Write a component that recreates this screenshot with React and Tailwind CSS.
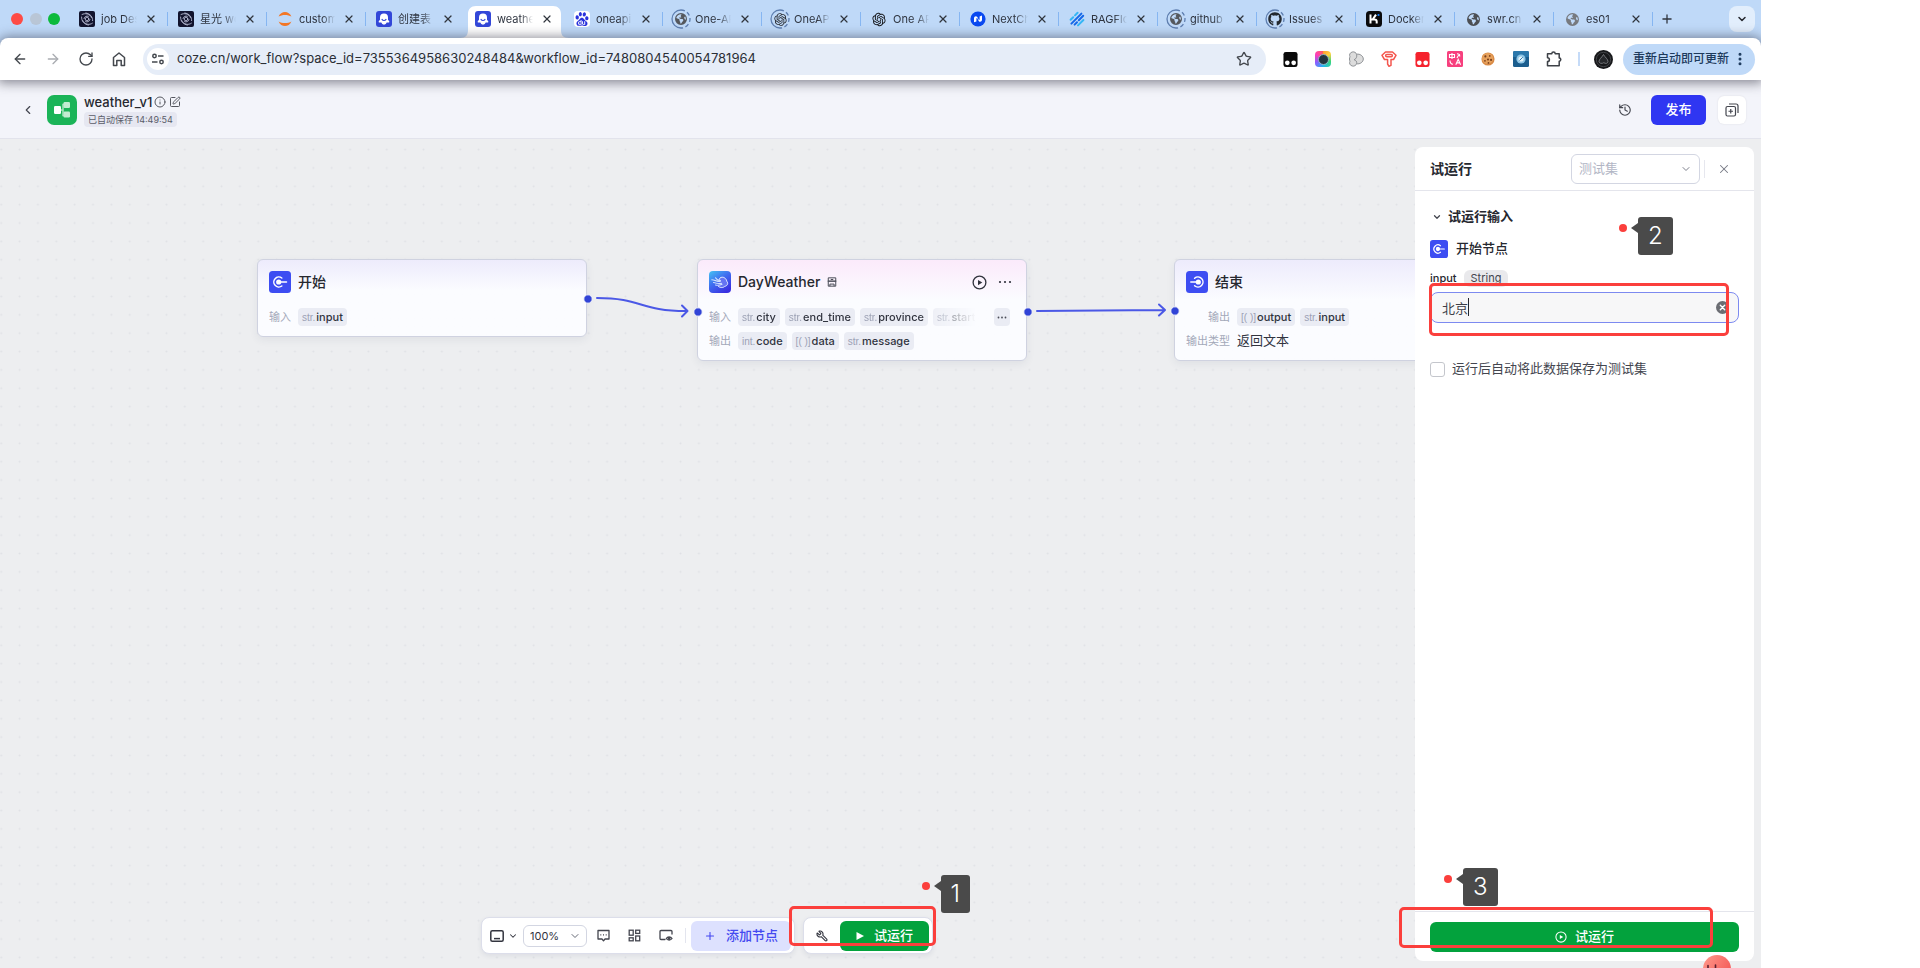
import React from "react";
import {
  ArrowLeft, ArrowRight, RotateCw, Star, X, Plus, ChevronDown, ChevronLeft,
  Info, SquarePen, History, EllipsisVertical, Wrench,
} from "lucide-react";
import { FaGithub, FaEarthAmericas } from "react-icons/fa6";
import { RiOpenaiFill } from "react-icons/ri";
import { SiBaidu } from "react-icons/si";

/* ---------- favicons ---------- */

const Swirl = () => (
  <svg viewBox="0 0 16 16" className="size-4">
    <rect width="16" height="16" rx="2" fill="#12142e" />
    <g fill="none" stroke="#b9bdd6" strokeWidth="0.9" strokeLinecap="round">
      <circle cx="8" cy="8" r="1.8" />
      <path d="M3 3.5C6 1.8 11 2.6 12.4 6.5" />
      <path d="M13.4 12.2C10.5 14.4 5.4 13.6 3.8 9.6" />
      <path d="M2.6 6C2.4 10 5 13.6 9.6 14" />
      <path d="M13.6 9.6C13.8 6 11.4 2.6 6.8 2" />
      <path d="M5 7.6C5.2 5.6 7.4 4.6 9.4 5.2" />
      <path d="M11 8.6C10.6 10.6 8.4 11.4 6.6 10.7" />
    </g>
  </svg>
);

const Jupyter = () => (
  <svg viewBox="0 0 16 16" className="size-4">
    <path d="M1.6 5.6C4 -0.6 12 -0.6 14.4 5.6C11 3.4 5 3.4 1.6 5.6Z" fill="#f37726" />
    <path d="M1.6 10.4C4 16.6 12 16.6 14.4 10.4C11 12.6 5 12.6 1.6 10.4Z" fill="#f37726" />
  </svg>
);

const Coze = () => (
  <svg viewBox="0 0 16 16" className="size-4">
    <rect width="16" height="16" rx="3" fill="#3347d8" />
    <path d="M8 2.4a4 4 0 0 1 4 4v2.4l1.2 1.4c.4.6 0 1.4-.8 1.4h-1.7a2.8 2.8 0 0 1-5.4 0H3.6c-.8 0-1.2-.8-.8-1.4L4 8.8V6.4a4 4 0 0 1 4-4Z" fill="#fff" />
    <path d="M6 8.4c.9 1.5 3.1 1.5 4 0" stroke="#3347d8" strokeWidth="1.1" fill="none" strokeLinecap="round" />
  </svg>
);

const Baidu = () => (
  <span className="flex size-4 items-center justify-center rounded-sm bg-white">
    <SiBaidu className="size-[14px] text-[#2a32dc]" />
  </span>
);

const Ringed = ({ children }) => (
  <span className="relative flex size-4 items-center justify-center">
    <svg viewBox="0 0 20 20" className="absolute -inset-0.5 size-5">
      <path d="M10 1a9 9 0 0 0 0 18" fill="none" stroke="#5f7fb0" strokeWidth="1.3" />
      <path d="M10 1a9 9 0 0 1 0 18" fill="none" stroke="#5f7fb0" strokeWidth="1.3" strokeDasharray="4 2.5" />
    </svg>
    {children}
  </span>
);

const Globe = () => <FaEarthAmericas className="size-3 text-[#55585d]" />;

const NextChat = () => (
  <svg viewBox="0 0 16 16" className="size-4">
    <circle cx="8" cy="8" r="7.6" fill="#0a49f0" />
    <path d="M4 11.200V7.200c0-2 2.300-2.700 3.300-1.100l1.400 2.600c.2.500.9.300.9-.2V5.500L12 4.400v4.400c0 2-2.300 2.700-3.300 1.100L7.300 7.300c-.2-.5-.9-.3-.9.2v2.9Z" fill="#fff" />
  </svg>
);

const RagFlow = () => (
  <svg viewBox="0 0 16 16" className="size-4">
    <g strokeWidth="2" strokeLinecap="round">
      <path d="M1.6 8.8 4.2 6.2M6 4.4 8.6 1.8" stroke="#35b6f5" />
      <path d="M2.4 12.6 12.4 2.6" stroke="#1668e8" />
      <path d="M5.6 13.6 8 11.2M9.8 9.2 14.2 4.8" stroke="#1668e8" />
      <path d="M9 14.4 14.4 9" stroke="#35b6f5" />
    </g>
  </svg>
);

const Kimi = () => (
  <svg viewBox="0 0 16 16" className="size-4">
    <rect width="16" height="16" rx="3.5" fill="#0b0b0d" />
    <path d="M4.5 3.500v9M4.500 8.600h4c1.600 0 2.200.8 2.200 2v1.900M10 3.600 6.800 8.400" fill="none" stroke="#fff" strokeWidth="2" />
    <circle cx="12.5" cy="4" r="1.1" fill="#1783ff" />
  </svg>
);

const TABS = [
  { t: "job Des", i: <Swirl /> },
  { t: "星光 wo", i: <Swirl /> },
  { t: "custom", i: <Jupyter /> },
  { t: "创建表", i: <Coze /> },
  { t: "weathe", i: <Coze />, active: true },
  { t: "oneapi", i: <Baidu /> },
  { t: "One-AP", i: <Ringed><Globe /></Ringed> },
  { t: "OneAPI", i: <Ringed><RiOpenaiFill className="size-[15px] text-[#25272b]" /></Ringed> },
  { t: "One API", i: <RiOpenaiFill className="size-[17px] text-[#101114]" /> },
  { t: "NextCh", i: <NextChat /> },
  { t: "RAGFlo", i: <RagFlow /> },
  { t: "github", i: <Ringed><Globe /></Ringed> },
  { t: "Issues", i: <Ringed><FaGithub className="size-[14px] text-[#24292f]" /></Ringed> },
  { t: "Docker", i: <Kimi /> },
  { t: "swr.cn", i: <FaEarthAmericas className="size-[13px] text-[#4c4f54]" /> },
  { t: "es01", i: <FaEarthAmericas className="size-[13px] text-[#777a7f]" /> },
];

function Tab({ t, i, active, divider }) {
  return (
    <div className="relative flex w-[99px] shrink items-start pl-[3px]">
      {active && (
        <svg viewBox="0 0 109 32" className="absolute bottom-0 left-[-5px] h-8 w-[109px]">
          <path d="M0 32C6 32 8 29 8 24V8C8 3 11 0 16 0H93C98 0 101 3 101 8V24C101 29 103 32 109 32Z" fill="#fff" />
        </svg>
      )}
      <div className="relative mt-[11px] flex h-4 w-full items-center pl-[7px]">
        <span className="flex size-4 shrink-0 items-center justify-center">{i}</span>
        <span className="ml-1.5 w-9 overflow-hidden whitespace-nowrap text-[11px] leading-4 text-[#2f3540] [mask-image:linear-gradient(to_right,black_65%,transparent)]">
          {t}
        </span>
        <button aria-label="关闭标签页" className="ml-[7px] flex size-3.5 items-center justify-center text-[#30353d]">
          <X className="size-3" strokeWidth={2.4} />
        </button>
        {divider && <span className="ml-auto h-3.5 w-px bg-[#86b6f2]" />}
      </div>
    </div>
  );
}

/* ---------- extension icons ---------- */

const Tamper = ({ fill }) => (
  <svg viewBox="0 0 16 16" className="size-[15px]">
    <rect x="0.5" width="15" height="16" rx="2.5" fill={fill} />
    <circle cx="4.6" cy="11.5" r="2.5" fill="#fff" />
    <circle cx="11.4" cy="11.5" r="2.5" fill="#fff" />
  </svg>
);

const EXTENSIONS = [
  { n: "脚本管理", i: <Tamper fill="#0a0a0a" /> },
  {
    n: "截图",
    i: (
      <span className="flex size-4 items-center justify-center rounded-sm bg-[conic-gradient(#ff9a2e,#ffd23f_15%,#37d67a_30%,#22b8f0_50%,#8d5cff_68%,#ff3fb4_85%,#ff5d5d)]">
        <span className="size-[11px] rounded-full border border-[#8fb5c4] bg-[#23353f]" />
      </span>
    ),
  },
  {
    n: "三环",
    i: (
      <svg viewBox="0 0 16 16" className="size-4" fill="#dcdcdc" stroke="#8f9296" strokeWidth="1">
        <path d="M4.200 1C6.500.4 8 1.800 8.600 3.200 12 2.600 15.300 5 15.300 8S12 13.400 8.600 12.800C8 14.200 6.500 15.600 4.200 15 1.800 14.400 1 12 2 10.200 1.300 8.800 1.300 7.200 2 5.800 1 4 1.800 1.600 4.200 1Z" />
        <path d="M8.600 3.200C9.300 6 8 8 6 8.800M8.600 12.800C9.300 10.500 7.500 8.800 6 8.800" fill="none" />
      </svg>
    ),
  },
  {
    n: "钥匙",
    i: (
      <svg viewBox="0 0 16 16" className="size-4" fill="none" stroke="#f4574f" strokeWidth="1.5" strokeLinejoin="round">
        <path d="M4.500 1h7L15 4.300 12.500 8.500H10v5.800L8 15.300 6.600 13V8.500H3.500L1 4.300Z" />
        <rect x="4.6" y="3.4" width="6.8" height="2.4" rx="1.2" />
      </svg>
    ),
  },
  { n: "脚本助手", i: <Tamper fill="#f5222d" /> },
  {
    n: "翻译",
    i: (
      <svg viewBox="0 0 16 16" className="size-4" fill="none" stroke="#fff" strokeWidth="1.1">
        <rect width="16" height="16" rx="1.5" fill="#f7407e" stroke="none" />
        <path d="M2.500 3.500h5v3h-5ZM5 2v6M10 2.800c2 0 2.800 1 2.800 2.600M10 7c.6-1.800 1.500-2.800 3-3.400M3 9.500c0 2.600 1 3.600 3 3.800M8.800 13.800 11.200 8.300 13.600 13.800M9.800 11.900h2.800" />
      </svg>
    ),
  },
  {
    n: "Cookie",
    i: (
      <svg viewBox="0 0 16 16" className="size-[14px]">
        <circle cx="8" cy="8" r="7.5" fill="#d98a45" />
        <circle cx="7.5" cy="7.3" r="6.3" fill="#e6a15c" />
        <g fill="#7a3f1b">
          <circle cx="5" cy="5" r="1.2" /><circle cx="10" cy="4.5" r="1" /><circle cx="8" cy="8.5" r="1.2" />
          <circle cx="4.5" cy="10" r="1" /><circle cx="11.5" cy="9" r="1.2" /><circle cx="8.5" cy="12.5" r="1" />
        </g>
      </svg>
    ),
  },
  {
    n: "浏览",
    i: (
      <svg viewBox="0 0 16 16" className="size-4">
        <rect width="16" height="16" rx="1.5" fill="#1b5e8e" />
        <path d="M0 1.500A1.500 1.500 0 0 1 1.500 0h13A1.500 1.500 0 0 1 16 1.500V6H0Z" fill="#2b78ab" />
        <circle cx="8" cy="8" r="4.6" fill="#8ec6e6" />
        <circle cx="8" cy="8" r="2.6" fill="#e4f3fa" />
        <path d="M6.500 9.500 9.800 6.200" stroke="#2b78ab" strokeWidth="1" />
      </svg>
    ),
  },
  {
    n: "扩展程序",
    i: (
      <svg viewBox="0 0 16 16" className="size-4" fill="none" stroke="#3d4147" strokeWidth="1.5" strokeLinejoin="round">
        <path d="M1.500 2.800h4.300a1.700 1.700 0 0 1 3.400 0h4v4.200a1.600 1.600 0 0 1 0 3.200v4.600H1.500V10.600a1.900 1.900 0 0 0 0-3.800Z" />
      </svg>
    ),
  },
];

/* ---------- node parts ---------- */

const StartIcon = ({ className }) => (
  <svg viewBox="0 0 22 22" className={className}>
    <rect width="22" height="22" rx="3.5" fill="#3d4df2" />
    <path d="M12.800 7A5 5 0 1 0 12.800 15" fill="none" stroke="#fff" strokeWidth="1.5" strokeLinecap="round" />
    <circle cx="9.7" cy="11" r="2.6" fill="#fff" />
    <path d="M10 11h7.500" stroke="#fff" strokeWidth="1.5" strokeLinecap="round" />
  </svg>
);

const EndIcon = ({ className }) => (
  <svg viewBox="0 0 22 22" className={className}>
    <rect width="22" height="22" rx="3.5" fill="#3d4df2" />
    <path d="M8.600 7.300A5 5 0 1 1 8.600 14.700" fill="none" stroke="#fff" strokeWidth="1.5" strokeLinecap="round" />
    <circle cx="12.3" cy="11" r="2.6" fill="#fff" />
    <path d="M4.800 11H12" stroke="#fff" strokeWidth="1.5" strokeLinecap="round" />
  </svg>
);

const WeatherIcon = ({ className }) => (
  <svg viewBox="0 0 22 22" className={className}>
    <defs>
      <linearGradient id="wx" x1="0" y1="0" x2="0.7" y2="1">
        <stop offset="0" stopColor="#45c3f3" />
        <stop offset="0.5" stopColor="#3f6cf0" />
        <stop offset="1" stopColor="#3a2fe0" />
      </linearGradient>
    </defs>
    <rect width="22" height="22" rx="4" fill="url(#wx)" />
    <path d="M9 15c2 2.200 5.500 1.800 6.800.3 2.600-.3 3.800-3.200 2-5C17.200 7 13.800 5 11 7 10 8 10.300 9 10.300 9.500" fill="#6674f2" stroke="#e6ecff" strokeWidth="1" />
    <path d="M2.800 8.800c3 .2 5 1.800 8.500 1.700M4.500 11.500c2.500.8 4.500 1.500 8 .8M6.500 6.800c1 1.800 3 2.700 5 2.700M6.500 14c2 .5 4 .5 6.500-.8" fill="none" stroke="#cfe0ff" strokeWidth="1.1" strokeLinecap="round" />
  </svg>
);

const PlayCircle = ({ className }) => (
  <svg viewBox="0 0 16 16" className={className}>
    <circle cx="8" cy="8" r="6.8" fill="none" stroke="currentColor" strokeWidth="1.4" />
    <path d="M6.400 5.200 11 8 6.400 10.800Z" fill="currentColor" />
  </svg>
);

function Chip({ type, name, className = "" }) {
  return (
    <span className={`flex h-[18px] shrink-0 items-center gap-px rounded bg-[#eaecf4] px-1 ${className}`}>
      <span className="font-['Liberation_Sans',sans-serif] text-[10px] text-[#9ca1b4]">{type}</span>
      <span className="text-[11px] font-medium text-[#31343f]">{name}</span>
    </span>
  );
}

const Label = ({ children, wide }) => (
  <span className={`${wide ? "w-11" : "w-[22px]"} mr-0.5 shrink-0 text-right text-[11px] text-[#a3a8b9]`}>{children}</span>
);

function Node({ className, tint, icon, title, extra, children }) {
  return (
    <section
      className={`absolute w-[330px] rounded-md border border-[#cfd2e0] bg-[#fbfcff] bg-linear-to-b ${tint} to-[#fbfcff] to-40% px-[11px] pt-2.5 pb-2.5 shadow-[0_3px_8px_rgba(40,50,90,0.07)] ${className}`}
    >
      <div className="flex h-6 items-center gap-[7px]">
        {icon}
        <h2 className="text-sm font-medium text-[#26282f]">{title}</h2>
        {extra}
      </div>
      <div className="mt-[14px] flex flex-col gap-1.5">{children}</div>
    </section>
  );
}

const Row = ({ children }) => <div className="flex h-[18px] items-center gap-[5px]">{children}</div>;

/* ---------- numbered callouts ---------- */

const Callout = ({ n, className }) => (
  <div className={`absolute z-30 flex items-start ${className}`}>
    <span className="mt-[7px] size-2 rounded-full bg-[#fb3f3c]" />
    <svg viewBox="0 0 7 10" className="mt-1.5 ml-1 h-2.5 w-[7px]"><path d="M0 5 7 0V10Z" fill="#4a4a4a" /></svg>
    <span className="flex h-[38px] items-center justify-center rounded-[3px] bg-[#4a4a4a] px-2.5 text-2xl font-light text-white">{n}</span>
  </div>
);

const Frame = ({ className }) => (
  <div className={`pointer-events-none absolute z-20 rounded-[5px] border-[3px] border-[#fb3f3c] ${className}`} />
);

export default function App() {
  return (
    <div className="min-h-screen bg-white pr-[159px] font-['Inter','Noto_Sans_CJK_SC',sans-serif] text-[#26282f]">
      <div className="flex min-h-screen flex-col overflow-hidden">
        {/* Tab strip */}
        <nav className="flex h-[38px] bg-[#bfd9f8]">
          <div className="flex w-[69px] shrink-0 items-start gap-1.5 pt-3 pl-[11px]">
            <span className="mt-px size-3 rounded-full bg-[#fe4b45]" />
            <span className="mt-px ml-px size-3 rounded-full bg-[#b9c6d6]" />
            <span className="mt-px size-3 rounded-full bg-[#0dba3c]" />
          </div>
          {TABS.map((tab, k) => (
            <Tab key={tab.t} {...tab} divider={k !== 3 && k !== 4} />
          ))}
          <button aria-label="新建标签页" className="mt-[11px] ml-1.5 flex size-4 items-center justify-center text-[#30353d]">
            <Plus className="size-3.5" strokeWidth={2.2} />
          </button>
          <button aria-label="搜索标签页" className="mt-1.5 mr-1.5 ml-auto flex h-[26px] w-[26px] items-center justify-center rounded-lg bg-[#e2eefc]">
            <ChevronDown className="size-3" strokeWidth={3} />
          </button>
        </nav>

        {/* Browser toolbar */}
        <div className="bg-[#bfd9f8]">
          <div className="relative z-10 flex h-[42px] items-center rounded-t-lg bg-white pr-1.5 shadow-[0_1px_12px_2px_rgba(60,60,75,0.6)]">
            <div className="flex w-[143px] items-center gap-[17px] pl-3 text-[#44484e]">
              <button aria-label="后退"><ArrowLeft className="size-4" strokeWidth={2} /></button>
              <button aria-label="前进" className="text-[#a9acb1]"><ArrowRight className="size-4" strokeWidth={2} /></button>
              <button aria-label="重新加载"><RotateCw className="size-4" strokeWidth={2} /></button>
              <button aria-label="主页">
                <svg viewBox="0 0 16 16" className="size-4" fill="none" stroke="currentColor" strokeWidth="1.5" strokeLinejoin="round">
                  <path d="M2.500 6.500 8 2l5.500 4.500V14.500h-3.300V9.500H5.800v5H2.500Z" />
                </svg>
              </button>
            </div>
            <div className="flex h-[31px] flex-1 items-center rounded-full bg-[#e6edf8] pr-3.5 pl-1">
              <button aria-label="网站信息" className="flex size-[22px] items-center justify-center rounded-full bg-white">
                <svg viewBox="0 0 14 14" className="size-3.5" fill="none" stroke="#44484e" strokeWidth="1.5">
                  <circle cx="3.5" cy="4" r="1.7" /><path d="M7 4h5.500M1 10h5.500" /><circle cx="10.5" cy="10" r="1.7" />
                </svg>
              </button>
              <input
                aria-label="地址"
                className="ml-2 flex-1 bg-transparent text-[13px] text-[#2b2f36] outline-none"
                defaultValue="coze.cn/work_flow?space_id=7355364958630248484&workflow_id=7480804540054781964"
              />
              <button aria-label="收藏"><Star className="size-4 text-[#44484e]" strokeWidth={2} /></button>
            </div>
            <div className="ml-4 flex items-center gap-[17px]">
              {EXTENSIONS.map((e) => (
                <button key={e.n} aria-label={e.n} className="flex size-4 items-center justify-center">{e.i}</button>
              ))}
            </div>
            <span className="ml-4 h-3.5 w-0.5 bg-[#c5dbf8]" />
            <button aria-label="个人资料" className="ml-3.5">
              <svg viewBox="0 0 19 19" className="size-[19px]">
                <circle cx="9.5" cy="9.5" r="9.5" fill="#17181a" />
                <circle cx="9.5" cy="9.5" r="7.2" fill="none" stroke="#4b4e52" strokeWidth="0.8" />
                <path d="M5 11.500C5 9 7.500 8 9.500 4.500 11 7.500 14 9 14 11.500c0 2-2.500 2.500-4.200 1.200C8 14 5 13.500 5 11.500Z" fill="#26282b" stroke="#85888c" strokeWidth="0.8" />
              </svg>
            </button>
            <button className="ml-2.5 flex h-[31px] w-[132px] items-center justify-end gap-[3px] rounded-full bg-[#bfd9f8] pr-[7px] text-xs font-medium text-[#1d3a5c]">
              重新启动即可更新
              <EllipsisVertical className="size-4" strokeWidth={2.5} />
            </button>
          </div>
        </div>

        {/* Workflow header */}
        <header className="flex h-[59px] items-center border-b border-[#e2e3ec] bg-[#f3f4fa] pt-0.5 pr-[15px] pl-[21px]">
          <button aria-label="返回"><ChevronLeft className="size-3.5 text-[#44464f]" /></button>
          <svg viewBox="0 0 30 30" className="ml-3 size-[30px]">
            <rect width="30" height="30" rx="7" fill="#1bb458" />
            <path d="M13 15h3V9.500h3M16 15v5.500h3" fill="none" stroke="#a9e5c0" strokeWidth="1.5" />
            <rect x="7" y="11" width="7" height="8" rx="1.2" fill="#fff" />
            <rect x="16.5" y="7" width="6.5" height="6" rx="1.2" fill="#c3ecd2" />
            <rect x="16.5" y="16.5" width="6.5" height="6" rx="1.2" fill="#c3ecd2" />
          </svg>
          <div className="ml-[7px] flex flex-col items-start gap-0.5 pt-px">
            <div className="flex items-center gap-[3px]">
              <h1 className="text-[13px] leading-4 font-medium">weather_v1</h1>
              <Info className="-ml-0.5 size-3 text-[#55575f]" />
              <button aria-label="编辑名称"><SquarePen className="size-3 text-[#55575f]" /></button>
            </div>
            <span className="rounded-sm bg-[#e6e7f1] px-1 text-[9px] leading-[15px] text-[#5a5c69]">已自动保存 14:49:54</span>
          </div>
          <button aria-label="历史记录" className="ml-auto"><History className="size-3.5 text-[#44464f]" /></button>
          <button className="ml-[19px] h-[30px] w-[55px] rounded-md bg-[#2f36f2] text-[13px] font-medium text-white">发布</button>
          <button aria-label="创建副本" className="ml-3 flex size-7 items-center justify-center rounded-md bg-white shadow-[0_0_2px_rgba(0,0,0,0.1)]">
            <svg viewBox="0 0 14 14" className="size-3.5" fill="none" stroke="#44464f" strokeWidth="1.2">
              <rect x="1" y="3.5" width="9.5" height="9.5" rx="1.5" />
              <path d="M4 1h7a2 2 0 0 1 2 2v7M5.750 6v4.500M3.500 8.250H8" />
            </svg>
          </button>
        </header>

        {/* Canvas */}
        <main className="relative flex flex-1 justify-end bg-[#edeef0]">
          <svg className="absolute inset-0 size-full">
            <defs>
              <pattern id="dots" x="-8" y="1.4" width="18.36" height="18.36" patternUnits="userSpaceOnUse">
                <circle cx="9.2" cy="9.2" r="1" fill="#dfe1e5" />
              </pattern>
            </defs>
            <rect width="100%" height="100%" fill="url(#dots)" />
          </svg>

          <Node className="top-[120px] left-[257px]" tint="from-[#edebfc]" icon={<StartIcon className="size-[22px]" />} title="开始">
            <Row>
              <Label>输入</Label>
              <Chip type="str." name="input" />
            </Row>
          </Node>

          <Node
            className="top-[120px] left-[697px]"
            tint="from-[#fbeafb]"
            icon={<WeatherIcon className="size-[22px]" />}
            title="DayWeather"
            extra={
              <>
                <svg viewBox="0 0 12 12" className="size-2.5" fill="none" stroke="#4a4c57" strokeWidth="1.2">
                  <path d="M1.500 1h9v4h-9ZM.8 5h10.400M1.500 5v6h9V5M3.500 11V8.500h5V11M4.500 3h3" />
                </svg>
                <button aria-label="运行节点" className="ml-auto text-[#30323c]"><PlayCircle className="size-[15px]" /></button>
                <button aria-label="更多" className="mr-[3px] ml-1 text-[#30323c]">
                  <svg viewBox="0 0 14 4" className="h-1 w-3.5" fill="currentColor">
                    <circle cx="2" cy="2" r="1.1" /><circle cx="7" cy="2" r="1.1" /><circle cx="12" cy="2" r="1.1" />
                  </svg>
                </button>
              </>
            }
          >
            <Row>
              <Label>输入</Label>
              <div className="flex w-[238px] gap-[5px] overflow-hidden [mask-image:linear-gradient(to_right,black_76%,transparent)]">
                <Chip type="str." name="city" />
                <Chip type="str." name="end_time" />
                <Chip type="str." name="province" />
                <Chip type="str." name="start_time" />
              </div>
              <button aria-label="更多输入" className="mr-[5px] ml-auto flex h-[18px] w-4 items-center justify-center rounded bg-[#eaecf4]">
                <svg viewBox="0 0 10 3" className="h-[3px] w-2.5" fill="#4a4c57">
                  <circle cx="1.5" cy="1.5" r="0.9" /><circle cx="5" cy="1.5" r="0.9" /><circle cx="8.5" cy="1.5" r="0.9" />
                </svg>
              </button>
            </Row>
            <Row>
              <Label>输出</Label>
              <Chip type="int." name="code" />
              <Chip type="[( )]" name="data" />
              <Chip type="str." name="message" />
            </Row>
          </Node>

          <Node className="top-[120px] left-[1174px]" tint="from-[#edebfc]" icon={<EndIcon className="size-[22px]" />} title="结束">
            <Row>
              <Label wide>输出</Label>
              <Chip type="[( )]" name="output" />
              <Chip type="str." name="input" />
            </Row>
            <Row>
              <Label wide>输出类型</Label>
              <span className="text-[13px] text-[#31343f]">返回文本</span>
            </Row>
          </Node>

          {/* Edges and ports */}
          <svg className="pointer-events-none absolute inset-0 size-full">
            <g fill="none" stroke="#4b58e6" strokeWidth="2" strokeLinecap="round" strokeLinejoin="round">
              <path d="M597 159C642 159 640 172 686 172M682 166.500 687.500 172 682 177.500" />
              <path d="M1037 172 1164 171M1159 165.500 1165 171 1159 176.500" />
            </g>
            <g fill="#3043d6" stroke="#f4f5fb" strokeWidth="1">
              <circle cx="588" cy="160" r="4.2" />
              <circle cx="698" cy="173" r="4.2" />
              <circle cx="1028" cy="173" r="4.2" />
              <circle cx="1175" cy="172" r="4.2" />
            </g>
          </svg>

          {/* Bottom toolbar */}
          <div className="absolute bottom-[14px] left-[481px] flex gap-2">
            <div className="flex h-[37px] items-center rounded-lg border border-[#dcdeea] bg-white pr-[3px] pl-2 shadow-[0_2px_5px_rgba(40,50,90,0.08)]">
              <button aria-label="交互模式" className="flex items-center gap-1 text-[#33353f]">
                <svg viewBox="0 0 14 12" className="h-3 w-3.5" fill="none" stroke="currentColor" strokeWidth="1.5">
                  <rect x="0.8" y="0.8" width="12.4" height="10.4" rx="1.5" /><path d="M4 8.600h6" />
                </svg>
                <ChevronDown className="size-2.5" strokeWidth={2.5} />
              </button>
              <div className="relative ml-[5px] flex">
                <select aria-label="缩放" className="h-[22px] w-16 appearance-none rounded-md border border-[#d3d6e2] bg-white py-0 pl-1.5 font-['Inter',sans-serif] text-[11px] leading-5 text-[#33353f]">
                  <option>100%</option>
                </select>
                <ChevronDown className="pointer-events-none absolute top-[5px] right-1.5 size-3 text-[#666975]" />
              </div>
              <button aria-label="添加注释" className="ml-2.5 text-[#44464f]">
                <svg viewBox="0 0 13 13" className="size-[13px]" fill="none" stroke="currentColor" strokeWidth="1.3" strokeLinejoin="round">
                  <path d="M1 1.500h11v8.500H8L6.500 11.800 5 10H1Z" /><path d="M3.300 5.800h1M6 5.800h1M8.700 5.800h1" />
                </svg>
              </button>
              <button aria-label="优化布局" className="ml-[18px] text-[#44464f]">
                <svg viewBox="0 0 13 13" className="size-[13px]" fill="none" stroke="currentColor" strokeWidth="1.3">
                  <rect x="1.2" y="1.2" width="4" height="5" /><rect x="7.7" y="1.2" width="4" height="3.2" />
                  <rect x="1.2" y="8.8" width="4" height="3" /><rect x="7.7" y="7" width="4" height="4.8" />
                </svg>
              </button>
              <button aria-label="缩略图" className="ml-[18px] text-[#44464f]">
                <svg viewBox="0 0 14 13" className="h-[13px] w-3.5" fill="none" stroke="currentColor" strokeWidth="1.3" strokeLinecap="round">
                  <path d="M6 10.500H2a1 1 0 0 1-1-1V2.500a1 1 0 0 1 1-1h10a1 1 0 0 1 1 1V5" />
                  <path d="M7.300 9.500C8.500 7.500 11.700 7.500 13 9.500 11.700 11.500 8.500 11.500 7.300 9.500Z" /><circle cx="10.1" cy="9.5" r="0.8" fill="currentColor" />
                </svg>
              </button>
              <span className="mx-[5px] ml-3 h-[15px] w-px bg-[#e3e5ee]" />
              <button className="flex h-[30px] w-[100px] items-center justify-center gap-2.5 rounded-md bg-[#dde1fe] text-[13px] font-medium text-[#4449f0]">
                <Plus className="size-3" strokeWidth={2.2} />添加节点
              </button>
            </div>
            <div className="flex h-[37px] items-center rounded-lg border border-[#dcdeea] bg-white pr-[3px] pl-3 shadow-[0_2px_5px_rgba(40,50,90,0.08)]">
              <button aria-label="调试"><Wrench className="size-3 -scale-x-100 text-[#33353f]" strokeWidth={2.2} /></button>
              <button className="ml-3 flex h-[30px] w-[89px] items-center justify-center gap-2.5 rounded-md bg-[#03a23d] text-[13px] font-medium text-white">
                <svg viewBox="0 0 8 8" className="size-2"><path d="M0.500 0 8 4 0.500 8Z" fill="#fff" /></svg>试运行
              </button>
            </div>
            <Frame className="-right-[3px] bottom-2 h-10 w-[147px]" />
            <Callout n="1" className="-right-[37px] bottom-[41px]" />
          </div>

          {/* Test-run panel */}
          <aside className="relative mt-2 mr-[7px] mb-[7px] flex w-[339px] flex-col rounded-lg bg-white">
            <div className="flex h-[44px] items-center border-b border-[#e4e5ec] px-[15px]">
              <h2 className="text-sm font-semibold">试运行</h2>
              <div className="relative ml-auto">
                <select aria-label="测试集" className="h-[30px] w-[129px] appearance-none rounded-md border border-[#d3d6e2] bg-white pl-[7px] text-[13px] text-[#b2b6c5]">
                  <option>测试集</option>
                </select>
                <ChevronDown className="pointer-events-none absolute top-[9px] right-2 size-3 text-[#7d808c]" />
              </div>
              <span className="ml-1 h-[18px] w-px bg-[#e6e7ee]" />
              <button aria-label="关闭" className="ml-3 text-[#777a85]"><X className="size-3.5" strokeWidth={1.8} /></button>
              <span className="w-2" />
            </div>
            <div className="flex-1 px-[15px] pt-4">
              <button className="flex h-5 items-center gap-1.5 pl-0.5 text-[13px] font-semibold">
                <ChevronDown className="size-2.5 text-[#44464f]" strokeWidth={3} />试运行输入
              </button>
              <div className="mt-3 flex h-5 items-center gap-2">
                <StartIcon className="size-[18px]" />
                <h3 className="text-[13px] font-medium">开始节点</h3>
              </div>
              <div className="mt-[11px] flex h-[17px] items-center gap-[7px]">
                <label htmlFor="city" className="text-[11px] font-medium">input</label>
                <span className="rounded-md bg-[#e9e9ec] px-[7px] text-[11px] leading-[17px] text-[#44464f]">String</span>
              </div>
              <div className="relative mt-[5px]">
                <input
                  id="city"
                  defaultValue="北京"
                  className="h-[31px] w-full rounded-lg border border-[#7d8af0] bg-[#f7f7f8] px-[11px] text-[13px] text-[#3d3f48] outline-none"
                />
                <span className="absolute top-1.5 left-[38px] h-[18px] w-px bg-[#26282f]" />
                <button aria-label="清除" className="absolute top-[9px] right-2.5">
                  <svg viewBox="0 0 13 13" className="size-[13px]">
                    <circle cx="6.5" cy="6.5" r="6.5" fill="#6b6d73" />
                    <path d="M4.300 4.300 8.700 8.700M8.700 4.300 4.300 8.700" stroke="#fff" strokeWidth="1.4" strokeLinecap="round" />
                  </svg>
                </button>
                <Frame className="-top-[9px] -left-px h-[53px] w-[300px]" />
              </div>
              <label className="mt-9 flex h-5 items-center gap-[7px] text-[13px] text-[#44464f]">
                <input type="checkbox" className="size-[15px] appearance-none rounded-[3px] border border-[#c4c6cc] bg-white" />
                运行后自动将此数据保存为测试集
              </label>
            </div>
            <div className="relative border-t border-[#e4e5ec] px-[15px] pt-2.5 pb-[9px]">
              <button className="flex h-[30px] w-full items-center justify-center gap-2 rounded-md bg-[#03a23d] text-[13px] font-medium text-white">
                <PlayCircle className="size-3" />试运行
              </button>
              <Frame className="-top-[5px] -left-4 h-[41px] w-[314px]" />
            </div>
            <Callout n="2" className="top-[70px] left-[204px]" />
            <Callout n="3" className="bottom-[55px] left-[29px]" />
          </aside>

          {/* Assistant mascot peeking over the edge */}
          <div className="absolute right-[30px] bottom-0 z-10 h-[13px] w-7 overflow-hidden">
            <svg viewBox="0 0 28 28" className="size-7">
              <defs>
                <linearGradient id="mascot" x1="0" y1="0" x2="1" y2="0.6">
                  <stop offset="0" stopColor="#ff9a8c" /><stop offset="1" stopColor="#f45a58" />
                </linearGradient>
              </defs>
              <circle cx="14" cy="14" r="14" fill="url(#mascot)" />
              <path d="M5 10.500v3M12.500 10v3" stroke="#5a2030" strokeWidth="1.6" strokeLinecap="round" />
            </svg>
          </div>
        </main>
      </div>
    </div>
  );
}
